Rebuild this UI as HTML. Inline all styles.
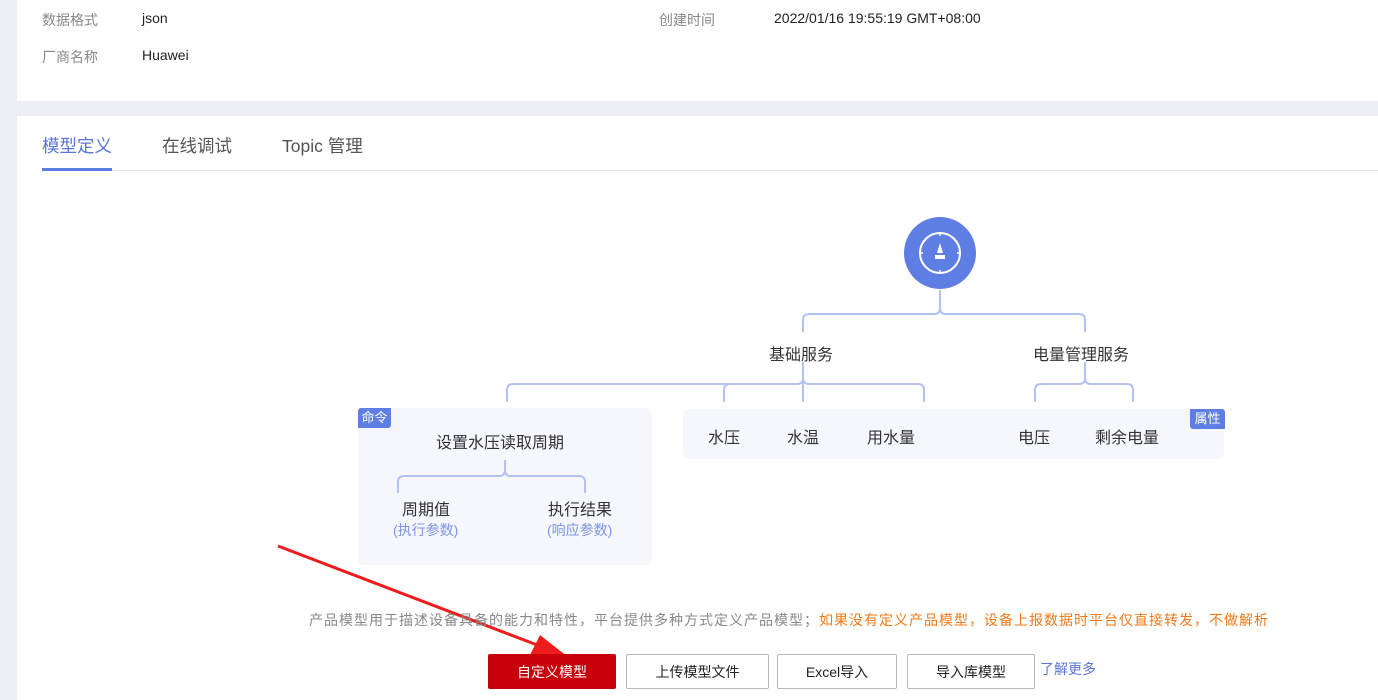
<!DOCTYPE html>
<html><head><meta charset="utf-8"><style>
*{margin:0;padding:0;box-sizing:border-box}
body{width:1378px;height:700px;overflow:hidden;background:#edeef3;font-family:"Liberation Sans","Noto Sans CJK SC",sans-serif;position:relative}
.p{position:absolute;background:#fff}
.t{position:absolute;white-space:nowrap}
.btn{position:absolute;top:654px;height:35px;border:1px solid #b8b8b8;border-radius:2px;background:#fff;font-size:14px;color:#222;display:flex;align-items:center;justify-content:center}
</style></head><body>
<div class="p" style="left:17px;top:0;width:1361px;height:101px"></div>
<div class="p" style="left:17px;top:116px;width:1361px;height:584px"></div>
<div class="t" style="left:42px;top:10px;font-size:14px;color:#888">数据格式</div>
<div class="t" style="left:142px;top:10px;font-size:14px;color:#222">json</div>
<div class="t" style="left:42px;top:47px;font-size:14px;color:#888">厂商名称</div>
<div class="t" style="left:142px;top:47px;font-size:14px;color:#222">Huawei</div>
<div class="t" style="left:659px;top:10px;font-size:14px;color:#888">创建时间</div>
<div class="t" style="left:774px;top:10px;font-size:14px;color:#222">2022/01/16 19:55:19 GMT+08:00</div>

<div class="t" style="left:42px;top:133px;font-size:17.5px;color:#5a76d8">模型定义</div>
<div class="t" style="left:162px;top:133px;font-size:17.5px;color:#555">在线调试</div>
<div class="t" style="left:282px;top:133px;font-size:17.5px;color:#555">Topic 管理</div>
<div style="position:absolute;left:42px;top:170px;width:1336px;height:1px;background:#e2e2e2"></div>
<div style="position:absolute;left:42px;top:168px;width:70px;height:3px;background:#5f7ee3"></div>

<div style="position:absolute;left:358px;top:408px;width:294px;height:157px;background:#f6f7fd;border-radius:6px"></div>
<div style="position:absolute;left:683px;top:409px;width:541px;height:50px;background:#f6f7fd;border-radius:6px"></div>
<div class="t" style="left:358px;top:408px;width:33px;height:20px;background:#5f7ee3;color:#fff;font-size:13px;line-height:20px;text-align:center;border-radius:3px 0 3px 0">命令</div>
<div class="t" style="left:1190px;top:409px;width:35px;height:20px;background:#5f7ee3;color:#fff;font-size:13px;line-height:20px;text-align:center;border-radius:0 3px 0 3px">属性</div>

<svg style="position:absolute;left:0;top:0" width="1378" height="700">
<g fill="none" stroke="#b4c2f3" stroke-width="2">
<path d="M940 290V308q0 6 6 6M940 308q0 6-6 6H809q-6 0-6 6v12M946 314H1079q6 0 6 6v12"/>
<path d="M803 362V402M803 378q0 6-6 6H513q-6 0-6 6v12M803 378q0 6 6 6H918q6 0 6 6v12M730 384q-6 0-6 6v12"/>
<path d="M1085 362V378q0 6-6 6H1041q-6 0-6 6v12M1085 378q0 6 6 6H1127q6 0 6 6v12"/>
<path d="M505 460V470q0 6-6 6H404q-6 0-6 6v11M505 470q0 6 6 6H579q6 0 6 6v11"/>
</g>
<circle cx="940" cy="253" r="36" fill="#5f7ee3"/>
<circle cx="940" cy="253" r="20" fill="none" stroke="#fff" stroke-width="2"/>
<g stroke="#fff" stroke-width="1.5"><path d="M940 233v3M940 270v3M920 253h3M957 253h3"/></g>
<path d="M940 243l-3 10h6z" fill="#fff"/><rect x="935" y="255" width="10" height="4" fill="#fff"/>
<path d="M278 546L545 648" stroke="#ee1c1c" stroke-width="3"/>
<path d="M568 657L530 655L540 635z" fill="#ee1c1c"/>
</svg>

<div class="t" style="left:769px;top:341px;font-size:16px;color:#333">基础服务</div>
<div class="t" style="left:1033px;top:341px;font-size:16px;color:#333">电量管理服务</div>
<div class="t" style="left:436px;top:429px;font-size:16px;color:#333">设置水压读取周期</div>
<div class="t" style="left:402px;top:496px;font-size:16px;color:#333">周期值</div>
<div class="t" style="left:548px;top:496px;font-size:16px;color:#333">执行结果</div>
<div class="t" style="left:393px;top:520px;font-size:14px;color:#7d94e6">(执行参数)</div>
<div class="t" style="left:547px;top:520px;font-size:14px;color:#7d94e6">(响应参数)</div>
<div class="t" style="left:708px;top:424px;font-size:16px;color:#333">水压</div>
<div class="t" style="left:787px;top:424px;font-size:16px;color:#333">水温</div>
<div class="t" style="left:867px;top:424px;font-size:16px;color:#333">用水量</div>
<div class="t" style="left:1018px;top:424px;font-size:16px;color:#333">电压</div>
<div class="t" style="left:1095px;top:424px;font-size:16px;color:#333">剩余电量</div>

<div class="t" style="left:309px;top:610px;font-size:14px;letter-spacing:1px;color:#888">产品模型用于描述设备具备的能力和特性，平台提供多种方式定义产品模型；<span style="color:#f07a1a">如果没有定义产品模型，设备上报数据时平台仅直接转发，不做解析</span></div>
<div class="btn" style="left:488px;width:128px;background:#c7000b;border-color:#c7000b;color:#fff">自定义模型</div>
<div class="btn" style="left:626px;width:143px">上传模型文件</div>
<div class="btn" style="left:777px;width:120px">Excel导入</div>
<div class="btn" style="left:907px;width:128px">导入库模型</div>
<div class="t" style="left:1040px;top:659px;font-size:14px;color:#5a76d8">了解更多</div>
</body></html>
